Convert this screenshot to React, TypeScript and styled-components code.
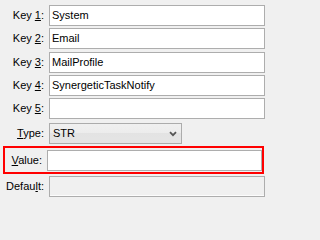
import React from "react";
import styled, { createGlobalStyle } from "styled-components";

const GlobalStyle = createGlobalStyle`
  html, body {
    margin: 0;
    padding: 0;
    background: #f0f0f0;
  }
  body {
    font-family: "Liberation Sans", Arial, sans-serif;
    font-size: 11px;
    color: #000;
  }
`;

const Panel = styled.div`
  width: 266px;
  height: 202px;
  box-sizing: border-box;
  padding: 5px 1px 0 5px;
  display: flex;
  flex-direction: column;
  background: #f0f0f0;
  overflow: hidden;
`;

const Row = styled.div<{ $top?: number }>`
  display: grid;
  grid-template-columns: 44px 1fr;
  align-items: center;
  height: 21px;
  margin-top: ${(p) => p.$top ?? 0}px;
`;

const Label = styled.label`
  text-align: right;
  padding-right: 5px;
  white-space: nowrap;
  line-height: 21px;
`;

const TextBox = styled.div<{ $disabled?: boolean }>`
  height: 21px;
  box-sizing: border-box;
  border: 1px solid #adadad;
  background: ${(p) => (p.$disabled ? "#f0f0f0" : "#fff")};
  box-shadow: ${(p) => (p.$disabled ? "inset 0 -2px 0 -1px #fcfcfc" : "none")};
  padding: 0 2px;
  line-height: 19px;
  white-space: nowrap;
  overflow: hidden;
`;

const Select = styled.div`
  width: 133px;
  height: 21px;
  box-sizing: border-box;
  border: 1px solid #acacac;
  background: linear-gradient(#f0f0f0 0%, #ececec 50%, #e3e3e3 50%, #e5e5e5 100%);
  padding: 0 4px 0 3px;
  display: flex;
  align-items: center;
  justify-content: space-between;
  line-height: 19px;
`;

const Highlight = styled.div`
  margin-top: 2px;
  margin-left: -2px;
  width: 261px;
  box-sizing: border-box;
  border: 2px solid #ff0000;
  padding: 2px 0 1px 0;
`;

const HighlightRow = styled(Row)`
  grid-template-columns: 42px 1fr;
`;

const rows = [
  { n: "1", value: "System" },
  { n: "2", value: "Email" },
  { n: "3", value: "MailProfile" },
  { n: "4", value: "SynergeticTaskNotify" },
  { n: "5", value: "" },
];

const Chevron = () => (
  <svg width="8" height="6" viewBox="0 0 8 6">
    <path d="M1 1.2 L4 4.2 L7 1.2" fill="none" stroke="#555" strokeWidth="1.8" />
  </svg>
);

export default function App() {
  return (
    <>
      <GlobalStyle />
      <Panel>
        {rows.map((r, i) => (
          <Row key={r.n} $top={i === 0 ? 0 : 2.33}>
            <Label>
              Key <u>{r.n}</u>:
            </Label>
            <TextBox>{r.value}</TextBox>
          </Row>
        ))}
        <Row $top={4}>
          <Label>
            <u>T</u>ype:
          </Label>
          <Select>
            <span>STR</span>
            <Chevron />
          </Select>
        </Row>
        <Highlight>
          <HighlightRow>
            <Label>
              <u>V</u>alue:
            </Label>
            <TextBox />
          </HighlightRow>
        </Highlight>
        <Row $top={2}>
          <Label>
            Defau<u>l</u>t:
          </Label>
          <TextBox $disabled />
        </Row>
      </Panel>
    </>
  );
}
